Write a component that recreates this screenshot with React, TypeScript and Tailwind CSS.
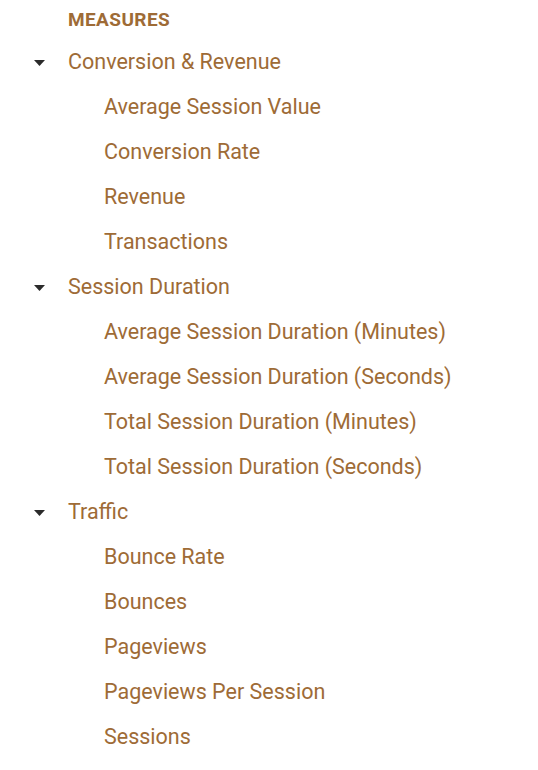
import React from "react";

const groups = [
  {
    name: "Conversion & Revenue",
    items: ["Average Session Value", "Conversion Rate", "Revenue", "Transactions"],
  },
  {
    name: "Session Duration",
    items: [
      "Average Session Duration (Minutes)",
      "Average Session Duration (Seconds)",
      "Total Session Duration (Minutes)",
      "Total Session Duration (Seconds)",
    ],
  },
  {
    name: "Traffic",
    items: ["Bounce Rate", "Bounces", "Pageviews", "Pageviews Per Session", "Sessions"],
  },
];

const Caret = () => (
  <svg width="11" height="6" viewBox="0 0 11 6" className="fill-[#2b2b2b]">
    <path d="M0 0 L11 0 L5.5 6 Z" />
  </svg>
);

export default function App() {
  return (
    <div className="h-[770px] w-[538px] bg-white font-['Roboto',sans-serif] text-[#9e6b36]">
      <div className="flex h-[40px] items-center pl-[68px] text-[19px] font-bold tracking-[0.4px]">MEASURES</div>
      {groups.map((g) => (
        <div key={g.name}>
          <div className="flex h-[45px] items-center text-[21.5px]">
            <div className="flex w-[68px] justify-start pl-[34px]">
              <Caret />
            </div>
            <span>{g.name}</span>
          </div>
          {g.items.map((it) => (
            <div key={it} className="flex h-[45px] items-center pl-[104px] text-[21.5px]">
              {it}
            </div>
          ))}
        </div>
      ))}
    </div>
  );
}
